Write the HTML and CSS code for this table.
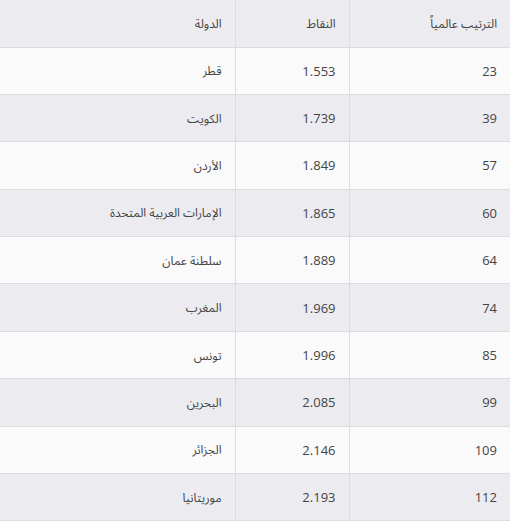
FILE: index.html
```html
<!DOCTYPE html>
<html lang="ar" dir="rtl">
<head>
<meta charset="utf-8">
<link rel="stylesheet" href="styles.css">
</head>
<body>
<table class="rank-table">
  <colgroup>
    <col class="col-rank">
    <col class="col-score">
    <col class="col-country">
  </colgroup>
  <thead>
    <tr><th class="ar">الترتيب عالمياً</th><th class="ar">النقاط</th><th class="ar">الدولة</th></tr>
  </thead>
  <tbody>
    <tr><td>23</td><td>1.553</td><td class="ar">قطر</td></tr>
    <tr><td>39</td><td>1.739</td><td class="ar">الكويت</td></tr>
    <tr><td>57</td><td>1.849</td><td class="ar">الأردن</td></tr>
    <tr><td>60</td><td>1.865</td><td class="ar">الإمارات العربية المتحدة</td></tr>
    <tr><td>64</td><td>1.889</td><td class="ar">سلطنة عمان</td></tr>
    <tr><td>74</td><td>1.969</td><td class="ar">المغرب</td></tr>
    <tr><td>85</td><td>1.996</td><td class="ar">تونس</td></tr>
    <tr><td>99</td><td>2.085</td><td class="ar">البحرين</td></tr>
    <tr><td>109</td><td>2.146</td><td class="ar">الجزائر</td></tr>
    <tr><td>112</td><td>2.193</td><td class="ar">موريتانيا</td></tr>
  </tbody>
</table>
</body>
</html>
```

FILE: styles.css
```css
html, body {
  margin: 0;
  padding: 0;
  background: #fafafa;
}
.rank-table {
  width: 510px;
  border-collapse: collapse;
  table-layout: fixed;
  font-family: "Open Sans", "Noto Sans Arabic UI", "Noto Sans Arabic", "DejaVu Sans", sans-serif;
  font-size: 13px;
  color: #444;
}
.col-rank { width: 161px; }
.col-score { width: 114px; }
.col-country { width: 235px; }
.rank-table th,
.rank-table td {
  text-align: right;
  font-weight: normal;
  height: 47.4px;
  padding: 0 13px;
  border: 1px solid #dcdce0;
  box-sizing: border-box;
}
.rank-table th { height: 47px; }
.rank-table .ar { font-size: 12px; }
.rank-table tr > :first-child { border-right: none; }
.rank-table tr > :last-child { border-left: none; }
.rank-table thead tr { background: #ececf0; }
.rank-table thead th { border-top: none; }
.rank-table tbody tr:nth-child(odd) { background: #fafafa; }
.rank-table tbody tr:nth-child(even) { background: #ececf0; }
```
